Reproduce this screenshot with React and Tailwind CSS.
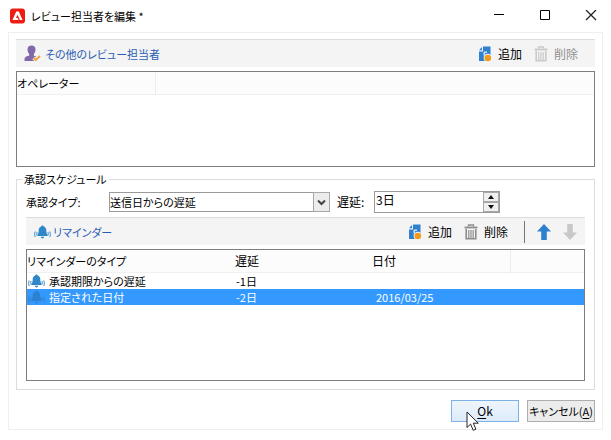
import React, { useState } from "react";

const UserIcon = () => (
  <svg width="17" height="17" viewBox="0 0 17 17" aria-hidden="true">
    <path
      d="M7.500 0.500C5 0.500 3.500 2 3.500 4.400c0 1.800.7 3.400 1.600 4.300v2C2.800 11 0.500 12 0.500 14v2h10l1.500-4.500-2.100-.8v-2c.9-.9 1.600-2.500 1.600-4.300C11.500 2 10 .5 7.500.5z"
      fill="#8168ac"
    />
    <path d="M9.500 13l2.300 2 4.200-4" fill="none" stroke="#f4f4f4" strokeWidth="3.600" />
    <path d="M9.500 13l2.300 2 4.200-4" fill="none" stroke="#eda63c" strokeWidth="2" />
  </svg>
);

const BellIcon = ({ muted }) => (
  <svg width="17" height="14" viewBox="0 0 17 14" aria-hidden="true" className="shrink-0">
    <g fill={muted ? "#2b82d2" : "#2f87c9"}>
      <path d="M8.500 0.500c.8 0 1.200.5 1.200 1.100 1.800.6 2.600 2 2.600 3.900 0 2.500.5 3.500 1.500 4.700v.8H3.200v-.8c1-1.200 1.500-2.200 1.500-4.700 0-1.900.8-3.300 2.600-3.900C7.300 1 7.700.5 8.500.5z" />
      <path d="M6.800 11.800h3.400c-.2 1-.8 1.600-1.700 1.600s-1.500-.6-1.700-1.600z" />
    </g>
    <g fill="none" stroke={muted ? "#3189da" : "#6facd9"} strokeWidth="1.300">
      <path d="M3.200 7c-.6 1-.6 2.500 0 3.500M1.400 6.500c-.9 1.500-.9 4 0 5.500" />
      <path d="M13.800 7c.6 1 .6 2.500 0 3.500M15.600 6.500c.9 1.500.9 4 0 5.500" />
    </g>
  </svg>
);

const AddIcon = () => (
  <svg width="14" height="16" viewBox="0 0 14 16" aria-hidden="true">
    <path d="M5 0.500h7.500V9H7v6H1V5.500h4z" fill="#2f80cf" />
    <path d="M1 4.300L4 1v3.300z" fill="#2f80cf" />
    <path d="M6 5.500h3V7H7v2.500H5.500V6.500z" fill="#cfe3f5" />
    <circle cx="9.800" cy="12" r="4.200" fill="#f4f4f4" />
    <circle cx="9.800" cy="12" r="3.300" fill="#f39a1d" />
  </svg>
);

const TrashIcon = ({ color }) => (
  <svg width="14" height="16" viewBox="0 0 14 16" aria-hidden="true">
    <g fill="none" stroke={color}>
      <path d="M4.500 2.500V1h5v1.500" strokeWidth="1.300" />
      <path d="M0.500 3.500h13" strokeWidth="1.800" />
      <path d="M2.200 5v9.800h9.600V5" strokeWidth="1.600" />
      <path d="M4.800 6v8M7 6v8M9.200 6v8" strokeWidth="1.200" />
    </g>
  </svg>
);

const ArrowIcon = ({ color, down }) => (
  <svg
    width="14"
    height="16"
    viewBox="0 0 14 16"
    aria-hidden="true"
    className={down ? "rotate-180" : ""}
  >
    <path d="M7 0l7 7.500H9.800V16H4.200V7.500H0z" fill={color} />
  </svg>
);

const ToolButton = ({ icon, label, disabled }) => (
  <button
    type="button"
    disabled={disabled}
    className="flex items-center gap-1.5 text-xs text-black disabled:text-[#8f8f8f]"
  >
    {icon}
    {label}
  </button>
);

const reminders = [
  { id: 1, type: "承認期限からの遅延", delay: "-1日", date: "" },
  { id: 2, type: "指定された日付", delay: "-2日", date: "2016/03/25" },
];

const App = () => {
  const [selected, setSelected] = useState(2);
  const [delay, setDelay] = useState(3);

  return (
    <div className="bg-white px-2 pb-2 font-['Noto_Sans_CJK_JP','Noto_Sans',sans-serif] text-[11px] leading-4 text-black [font-feature-settings:'palt']">
      {/* title bar */}
      <header className="flex h-8 items-center pr-1 pl-0.5">
        <svg width="15" height="16" viewBox="0 0 15 16" aria-hidden="true">
          <rect y="0.500" width="15" height="15" rx="3" fill="#ee1c12" />
          <path
            d="M6.200 3.500h2.600l3.700 8.500H9.900L7.500 6.700 6 10h1.700l.9 2H2.500z"
            fill="#fff"
          />
        </svg>
        <h1 className="ml-1.5 flex-1">レビュー担当者を編集 *</h1>
        <div className="flex items-center gap-[30px]">
          <button type="button" aria-label="最小化" className="px-0.5">
            <svg width="12" height="12" viewBox="0 0 12 12">
              <path d="M1 4.500h10" stroke="#000" />
            </svg>
          </button>
          <button type="button" aria-label="最大化" className="px-0.5">
            <svg width="12" height="12" viewBox="0 0 12 12">
              <path d="M1.500 0.500h9v9h-9z" fill="none" stroke="#000" />
            </svg>
          </button>
          <button type="button" aria-label="閉じる" className="px-0.5">
            <svg width="12" height="12" viewBox="0 0 12 12">
              <path d="M1 0l10 10M11 0L1 10" stroke="#222" strokeWidth="1.300" />
            </svg>
          </button>
        </div>
      </header>

      <main className="border border-[#efefef] px-[7px] pt-1.5 pb-[7px]">
        {/* reviewers */}
        <div className="flex h-7 items-center border-t border-[#dcdcdc] bg-[#f4f4f4] pr-[17px] pl-2">
          <UserIcon />
          <h2 className="ml-1 flex-1 text-[#2a5db5]">その他のレビュー担当者</h2>
          <div className="flex items-center gap-3">
            <ToolButton icon={<AddIcon />} label="追加" />
            <ToolButton icon={<TrashIcon color="#c9c9c9" />} label="削除" disabled />
          </div>
        </div>
        <div className="mt-1 min-h-24 border border-[#7d7d7d]">
          <table className="w-full table-fixed">
            <thead>
              <tr className="h-[22px] border-b border-[#f0f0f0] bg-[#fcfcfc] text-left">
                <th className="w-[138px] border-r border-[#ececf2] font-normal">オペレーター</th>
                <td></td>
              </tr>
            </thead>
          </table>
        </div>

        {/* schedule */}
        <fieldset className="mt-1 min-w-0 border border-[#dcdcdc] px-[9px] pb-2">
          <legend className="-ml-1 px-0.5">承認スケジュール</legend>
          <div className="mt-1 flex items-center">
            <label htmlFor="approval-type" className="w-[83px]">
              承認タイプ:
            </label>
            <div className="relative w-[221px]">
              <select
                id="approval-type"
                className="block h-5 w-full appearance-none border border-[#9a9a9a] bg-white pr-4 leading-4"
              >
                <option>送信日からの遅延</option>
              </select>
              <span className="pointer-events-none absolute inset-y-0 right-0 flex w-[17px] items-center justify-center border border-[#a8a8a8] bg-[#ececec]">
                <svg width="9" height="7" viewBox="0 0 9 7">
                  <path d="M1 1.500l3.500 3.500L8 1.500" fill="none" stroke="#444" strokeWidth="2" />
                </svg>
              </span>
            </div>
            <label htmlFor="delay" className="ml-[7px] w-[37px] text-xs">
              遅延:
            </label>
            <div className="flex h-[22px] w-[126px] border border-[#9a9a9a] bg-white text-xs">
              <input
                id="delay"
                value={`${delay}日`}
                onChange={(e) => setDelay(parseInt(e.target.value, 10) || 0)}
                className="h-4 min-w-0 flex-1 pl-px leading-4 outline-none"
              />
              <div className="flex w-4 flex-col">
                <button
                  type="button"
                  aria-label="増やす"
                  onClick={() => setDelay(delay + 1)}
                  className="flex flex-1 items-center justify-center border border-[#a8a8a8] bg-[#f0f0f0]"
                >
                  <svg width="6" height="4" viewBox="0 0 6 4">
                    <path d="M3 0l3 4H0z" fill="#111" />
                  </svg>
                </button>
                <button
                  type="button"
                  aria-label="減らす"
                  onClick={() => setDelay(delay - 1)}
                  className="flex flex-1 items-center justify-center border border-[#a8a8a8] bg-[#f0f0f0]"
                >
                  <svg width="6" height="4" viewBox="0 0 6 4">
                    <path d="M3 4L0 0h6z" fill="#111" />
                  </svg>
                </button>
              </div>
            </div>
          </div>

          <div className="mt-1 flex h-7 items-center border-t border-[#dcdcdc] bg-[#f4f4f4] pr-2 pl-2">
            <BellIcon />
            <h2 className="ml-0.5 flex-1 text-[#2a5db5]">リマインダー</h2>
            <div className="flex items-center gap-3">
              <ToolButton icon={<AddIcon />} label="追加" />
              <ToolButton icon={<TrashIcon color="#8c8c8c" />} label="削除" />
              <span className="ml-1 h-[22px] w-px bg-[#777]" />
              <button type="button" aria-label="上へ">
                <ArrowIcon color="#2f80d0" />
              </button>
              <button type="button" aria-label="下へ" disabled>
                <ArrowIcon color="#c8c8c8" down />
              </button>
            </div>
          </div>
          <div className="mt-1 min-h-[132px] border border-[#7d7d7d]">
            <table className="w-full table-fixed text-left">
              <thead>
                <tr className="h-[22px] border-b border-[#f0f0f0] bg-[#fcfcfc]">
                  <th className="w-[208px] font-normal">リマインダーのタイプ</th>
                  <th className="w-[137px] text-xs font-normal">遅延</th>
                  <th className="w-[138px] border-r border-[#ececf2] text-xs font-normal">日付</th>
                  <td></td>
                </tr>
              </thead>
              <tbody>
                {reminders.map((r) => (
                  <tr
                    key={r.id}
                    onClick={() => setSelected(r.id)}
                    className={selected === r.id ? "h-4 bg-[#3399ff] text-white" : "h-4"}
                  >
                    <td>
                      <div className="flex items-center gap-1 pl-px">
                        <BellIcon muted={selected === r.id} />
                        {r.type}
                      </div>
                    </td>
                    <td className="pl-px">{r.delay}</td>
                    <td className="pl-1">{r.date}</td>
                    <td></td>
                  </tr>
                ))}
              </tbody>
            </table>
          </div>
        </fieldset>

        {/* actions */}
        <div className="mt-2.5 flex justify-end gap-2">
          <button
            type="button"
            className="relative h-[22px] w-[68px] border border-[#7eb0e8] bg-linear-to-b from-[#eef5fc] to-[#dcebfb] text-xs"
          >
            <u className="underline-offset-2">O</u>k
            <svg
              width="14"
              height="21"
              viewBox="0 0 14 21"
              aria-hidden="true"
              className="absolute top-2.5 left-3.5"
            >
              <path
                d="M1 1v15.500l3.600-3.400 2.600 6.200 2.700-1.100-2.600-6h5z"
                fill="#fff"
                stroke="#222"
              />
            </svg>
          </button>
          <button
            type="button"
            className="h-[22px] w-[68px] border border-[#adadad] bg-[#ececec] whitespace-nowrap"
          >
            キャンセル(<u className="underline-offset-2">A</u>)
          </button>
        </div>
      </main>
    </div>
  );
};

export default App;
